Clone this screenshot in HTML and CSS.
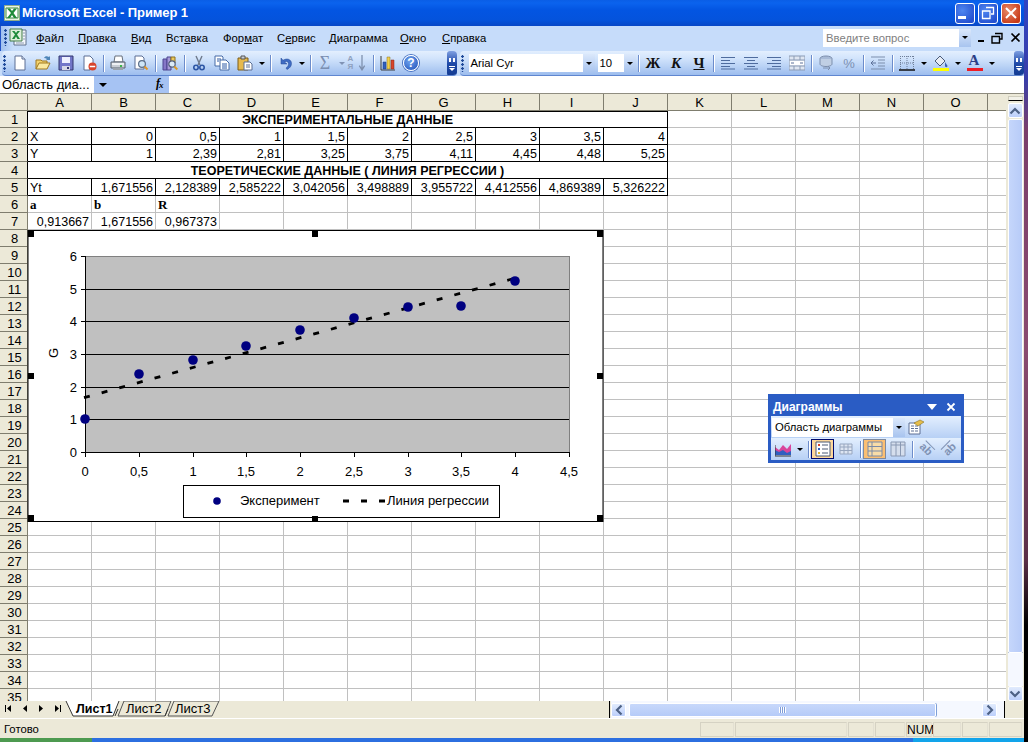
FILE: index.html
```html
<!DOCTYPE html>
<html lang="ru">
<head>
<meta charset="utf-8">
<title>Microsoft Excel - Пример 1</title>
<link rel="stylesheet" href="styles.css">
</head>
<body>
<svg class="defs" width="0" height="0">
  <symbol id="page" viewBox="0 0 16 16"><path d="M3 1h7l3 3v11H3z" fill="#fff" stroke="#5c6f94"/><path d="M10 1v3h3" fill="#dfe8f6" stroke="#5c6f94"/></symbol>
  <symbol id="open" viewBox="0 0 16 16"><path d="M1 14V5h5l1 1h5v2" fill="#f3d36e" stroke="#a07820"/><path d="M1 14l3-6h11l-3 6z" fill="#fbe9a0" stroke="#a07820"/><path d="M9 3c1-2 3-2 5-1l1-1v4h-4l1-1c-1-.8-2-1-3-1z" fill="#4f86b8"/></symbol>
  <symbol id="save" viewBox="0 0 16 16"><path d="M1 1h14v14H1z" fill="#7276c8" stroke="#33366f"/><path d="M4 2h8v6H4z" fill="#eef0ff"/><path d="M4 11h8v4H4z" fill="#d5d7e6"/><path d="M9 12h2v2H9z" fill="#33366f"/></symbol>
  <symbol id="perm" viewBox="0 0 16 16"><path d="M3 1h6l3 3v6H9v5H3z" fill="#fff" stroke="#5c6f94"/><circle cx="11.5" cy="11.5" r="4" fill="#d8452c"/><path d="M8.8 10.7h5.4v1.6H8.8z" fill="#fff"/></symbol>
  <symbol id="print" viewBox="0 0 16 16"><path d="M5 1h7l1 6H4z" fill="#fff" stroke="#68707c"/><path d="M1 7h14v6H1z" fill="#c7cdd4" stroke="#596270"/><path d="M2 8h12v2H2z" fill="#eef1f4"/><path d="M10 10h2v2h-2z" fill="#3bb44a"/><path d="M3 13h10v2H3z" fill="#9aa3ad"/></symbol>
  <symbol id="preview" viewBox="0 0 16 16"><path d="M2 1h7l2 2v11H2z" fill="#fff" stroke="#5c6f94"/><circle cx="9" cy="9" r="3.4" fill="#cfe6f7" stroke="#5a6d88" stroke-width="1.2"/><path d="M11.5 11.5l3 3" stroke="#e0962a" stroke-width="2"/></symbol>
  <symbol id="research" viewBox="0 0 16 16"><path d="M1 4h4v11H1z" fill="#8577c7" stroke="#4d4590"/><path d="M5 2h4v13H5z" fill="#a79ad8" stroke="#4d4590"/><path d="M9 2h4v6H9z" fill="#ecc85d" stroke="#8a7020"/><circle cx="10" cy="9" r="3.2" fill="#dcebf7" stroke="#4f5c78" stroke-width="1.2"/><path d="M12.3 11.5l3 3" stroke="#d99a2b" stroke-width="2"/></symbol>
  <symbol id="cut" viewBox="0 0 16 16"><path d="M5 1l4 9M11 1L7 10" stroke="#6f7a8c" stroke-width="1.4" fill="none"/><circle cx="5" cy="12.5" r="2.2" fill="none" stroke="#2d56a5" stroke-width="1.6"/><circle cx="11" cy="12.5" r="2.2" fill="none" stroke="#2d56a5" stroke-width="1.6"/></symbol>
  <symbol id="copy" viewBox="0 0 16 16"><path d="M1 1h7l1 1v9H1z" fill="#fff" stroke="#476aa6"/><path d="M6 5h6l3 3v7H6z" fill="#fff" stroke="#476aa6"/><path d="M3 4h4M3 6h2M8 9h5M8 11h5M8 13h5" stroke="#2f5aa5"/></symbol>
  <symbol id="paste" viewBox="0 0 16 16"><path d="M1 3h10v12H1z" fill="#e6b94e" stroke="#7c5c18"/><path d="M4 1h4v3H4z" fill="#c9cfd6" stroke="#555"/><path d="M7 7h6l2 2v6H7z" fill="#fff" stroke="#5c6f94"/><path d="M9 10h4M9 12h4" stroke="#5c6f94"/></symbol>
  <symbol id="undo" viewBox="0 0 16 16"><path d="M4 3v6h6L7.600 7c2-1.400 3.900-.3 3.900 2 0 1.600-.9 3-2.500 4l1 1.500C13 13 14.500 11 14.500 8.500 14.500 4.500 10 2.600 6 5.300z" fill="#3f6cc4" stroke="#244a96" stroke-width=".5"/></symbol>
  <symbol id="chart" viewBox="0 0 16 16"><path d="M1 1v14h14" fill="none" stroke="#3c3c3c"/><path d="M3 7h3v7H3z" fill="#2f5fc0" stroke="#1d3c80" stroke-width=".5"/><path d="M7 2h3v12H7z" fill="#f2d04a" stroke="#8a7020" stroke-width=".5"/><path d="M11 5h3v9h-3z" fill="#d8452c" stroke="#80281a" stroke-width=".5"/></symbol>
  <symbol id="alignl" viewBox="0 0 16 16"><path d="M1 2.500h14M1 5.500h9M1 8.500h14M1 11.500h9M1 14h14" stroke="#4f6c9e"/></symbol>
  <symbol id="alignc" viewBox="0 0 16 16"><path d="M1 2.500h14M4 5.500h8M1 8.500h14M4 11.500h8M1 14h14" stroke="#4f6c9e"/></symbol>
  <symbol id="alignr" viewBox="0 0 16 16"><path d="M1 2.500h14M6 5.500h9M1 8.500h14M6 11.500h9M1 14h14" stroke="#4f6c9e"/></symbol>
  <symbol id="merge" viewBox="0 0 16 16"><path d="M0 1h16v14H0z" fill="#dfe6f1" stroke="#8b9bb5"/><path d="M0 5h16M0 11h16M5 1v4M11 1v4M5 11v4M11 11v4" stroke="#8b9bb5"/><path d="M1 6h14v4H1z" fill="#fff"/><path d="M2 8h3M14 8h-3" stroke="#5c7199"/></symbol>
  <symbol id="currency" viewBox="0 0 16 16"><ellipse cx="8" cy="3.500" rx="6" ry="2.500" fill="#a8bad6" stroke="#7d8fad"/><path d="M2 4v5c0 1.500 3 2.500 6 2.500s6-1 6-2.500V4" fill="#c0cfe4" stroke="#7d8fad"/><path d="M5 13h7l-2-2M12 13l-2 2" fill="none" stroke="#7d8fad"/></symbol>
  <symbol id="indent" viewBox="0 0 16 16"><path d="M1 2h14M8 5h7M8 8h7M8 11h7M1 14h14" stroke="#7d8fad"/><path d="M6 8H1M3.500 5.500L1 8l2.500 2.500" fill="none" stroke="#5c7199"/></symbol>
  <symbol id="borders" viewBox="0 0 16 16"><path d="M1 1.500h14M1 8h14M1.500 1v13M8 1v13M14.500 1v13" stroke="#6f7f99" stroke-dasharray="1 1"/><path d="M0 15h16" stroke="#111" stroke-width="1.500"/></symbol>
  <symbol id="fill" viewBox="0 0 16 16"><path d="M2 6l5-5 5 5-5 5z" fill="#e6ecf5" stroke="#4a5a78"/><path d="M12 7c1 2 2.500 3 2.500 4 0 1.500-2.500 1.500-2.500 0z" fill="#3d63b4"/><path d="M0 13h16v3H0z" fill="#ffff00"/></symbol>
  <symbol id="fcolor" viewBox="0 0 16 16"><path d="M0 13h16v3H0z" fill="#ee1c25"/></symbol>
  <symbol id="area" viewBox="0 0 16 16"><path d="M0 13V6l4 3 4-5 4 4 4-5v10z" fill="#d9459b"/><path d="M0 14V9l4 2 4-2 4 3 4-2v4z" fill="#2f5fc0"/><path d="M0 4v11h16" fill="none" stroke="#333"/></symbol>
  <symbol id="legend" viewBox="0 0 16 16"><path d="M1 1h14v14H1z" fill="#fff" stroke="#4b5a74"/><path d="M3 3h2v2H3z" fill="#d8452c"/><path d="M3 7h2v2H3z" fill="#2f5fc0"/><path d="M3 11h2v2H3z" fill="#e0b52c"/><path d="M7 4h6M7 8h6M7 12h6" stroke="#4b5a74"/></symbol>
  <symbol id="dtable" viewBox="0 0 16 16"><path d="M2 3h12v10H2zM2 6h12M2 9.500h12M6 3v10M10 3v10" fill="#dde5f2" stroke="#97a6bf"/></symbol>
  <symbol id="byrow" viewBox="0 0 16 16"><path d="M1 1h14v14H1z" fill="#f8dca8" stroke="#7b8aa6"/><path d="M1 5.500h14M1 10h14M5 1v14" stroke="#7b8aa6"/></symbol>
  <symbol id="bycol" viewBox="0 0 16 16"><path d="M1 1h14v14H1z" fill="#d5deed" stroke="#8a99b3"/><path d="M1 4h14M6 1v14M10.500 1v14" stroke="#8a99b3"/></symbol>
  <symbol id="props" viewBox="0 0 16 16"><path d="M1 4h11v11H1z" fill="#fff" stroke="#5c6f94"/><path d="M3 7h3M3 9.500h3M3 12h3M7 7h3M7 9.500h3M7 12h3" stroke="#5c6f94"/><path d="M6 4l6-3 4 2-6 4z" fill="#e6be4a" stroke="#8a7020" stroke-width=".6"/></symbol>
</svg>

<div class="screen">
<div class="window">
  <header class="titlebar">
    <svg class="appicon" width="16" height="16" viewBox="0 0 16 16"><path d="M.5.5h15v15H.5z" fill="#e9f3e4" stroke="#8fae8a"/><path d="M2 3h12v10H2z" fill="#fff" stroke="#3c8a44"/><path d="M3 3.500l4 4.500-4 5h3l2-3 2 3h3L9.500 8 13 3.500h-3L8 6 6 3.500z" fill="#1f8a3a"/></svg>
    <span class="title">Microsoft Excel - Пример 1</span>
    <div class="winbtns">
      <div class="wbtn"><span class="g-min"></span></div>
      <div class="wbtn"><svg width="14" height="14" viewBox="0 0 14 14"><path d="M5 1.500h7.500V8H10M1.500 5H9v7.500H1.500z" fill="none" stroke="#fff" stroke-width="1.300"/></svg></div>
      <div class="wbtn close"><svg width="14" height="14" viewBox="0 0 14 14"><path d="M2 2l10 10M12 2L2 12" stroke="#fff" stroke-width="2"/></svg></div>
    </div>
  </header>

  <nav class="menubar">
    <span class="grip"></span>
    <svg class="docicon" width="19" height="19" viewBox="0 0 19 19"><path d="M5 2h12v15H5z" fill="#f4f7fb" stroke="#60708c"/><path d="M1 1h12v12H1z" fill="#dff0dc" stroke="#3e7a47"/><path d="M3 3l3 3.500L3 11h2.500L7 8.500 8.500 11H11L8 6.500 11 3H8.500L7 5 5.500 3z" fill="#1f8a3a"/><path d="M7 15h8M14 5h2M14 8h2M14 11h2" stroke="#8c9bb3"/></svg>
    <ul class="menu">
      <li><u>Ф</u>айл</li><li><u>П</u>равка</li><li><u>В</u>ид</li><li>Вст<u>а</u>вка</li><li>Фор<u>м</u>ат</li><li>С<u>е</u>рвис</li><li><u>Д</u>иаграмма</li><li><u>О</u>кно</li><li><u>С</u>правка</li>
    </ul>
    <div class="ask"><span class="asktext">Введите вопрос</span><span class="askdrop"><i class="tri"></i></span></div>
    <div class="docbtns">
      <span class="g-dmin"></span>
      <svg width="12" height="12" viewBox="0 0 12 12"><path d="M4 1.500h7V7H9M1 4.500h7.500V11H1z" fill="none" stroke="#000" stroke-width="1.400"/></svg>
      <svg width="11" height="11" viewBox="0 0 11 11"><path d="M1.500 1.500l8 8M9.500 1.500l-8 8" stroke="#000" stroke-width="1.700"/></svg>
    </div>
  </nav>

  <div class="toolrow">
    <div class="tb tb1">
      <span class="grip"></span>
      <span class="i"><svg><use href="#page"/></svg></span>
      <span class="i"><svg><use href="#open"/></svg></span>
      <span class="i"><svg><use href="#save"/></svg></span>
      <span class="i"><svg><use href="#perm"/></svg></span>
      <span class="sep"></span>
      <span class="i"><svg><use href="#print"/></svg></span>
      <span class="i"><svg><use href="#preview"/></svg></span>
      <span class="sep"></span>
      <span class="i"><svg><use href="#research"/></svg></span>
      <span class="sep"></span>
      <span class="i"><svg><use href="#cut"/></svg></span>
      <span class="i"><svg><use href="#copy"/></svg></span>
      <span class="i"><svg><use href="#paste"/></svg></span>
      <span class="dd"><i class="tri"></i></span>
      <span class="sep"></span>
      <span class="i"><svg><use href="#undo"/></svg></span>
      <span class="dd"><i class="tri"></i></span>
      <span class="sep"></span>
      <span class="i glyph sigma">Σ</span>
      <span class="dd"><i class="tri off"></i></span>
      <span class="i"><span class="sort"><span class="az"><span>А</span><span>Я</span></span><svg class="sortarrow" width="6" height="15" viewBox="0 0 6 15"><path d="M3 0v13M.5 10L3 14l2.500-4" fill="none" stroke="#7d8fad" stroke-width="1.200"/></svg></span></span>
      <span class="sep"></span>
      <span class="i"><svg><use href="#chart"/></svg></span>
      <span class="i help"><span class="helpdot">?</span></span>
      <span class="chev"><i class="ff"></i><i class="bar"></i><i class="tri white"></i></span>
    </div>
    <div class="tb tb2">
      <span class="grip"></span>
      <div class="combo font"><span>Arial Cyr</span><span class="cdrop"><i class="tri"></i></span></div>
      <div class="combo size"><span>10</span><span class="cdrop"><i class="tri"></i></span></div>
      <span class="sep"></span>
      <span class="i glyph fmt">Ж</span>
      <span class="i glyph fmt it">К</span>
      <span class="i glyph fmt ul">Ч</span>
      <span class="sep"></span>
      <span class="i"><svg><use href="#alignl"/></svg></span>
      <span class="i"><svg><use href="#alignc"/></svg></span>
      <span class="i"><svg><use href="#alignr"/></svg></span>
      <span class="i"><svg><use href="#merge"/></svg></span>
      <span class="sep"></span>
      <span class="i"><svg><use href="#currency"/></svg></span>
      <span class="i glyph pct">%</span>
      <span class="sep"></span>
      <span class="i"><svg><use href="#indent"/></svg></span>
      <span class="sep"></span>
      <span class="i"><svg><use href="#borders"/></svg></span>
      <span class="dd"><i class="tri"></i></span>
      <span class="i"><svg><use href="#fill"/></svg></span>
      <span class="dd"><i class="tri"></i></span>
      <span class="i colorA"><span class="letterA">A</span><svg><use href="#fcolor"/></svg></span>
      <span class="dd"><i class="tri"></i></span>
      <span class="chev"><i class="ff"></i><i class="bar"></i><i class="tri white"></i></span>
    </div>
  </div>

  <div class="formula">
    <div class="namebox">Область диа...</div>
    <div class="namedrop"><i class="tri wide3"></i></div>
    <div class="fx">f<sub>x</sub></div>
    <div class="finput"></div>
  </div>

  <main class="sheet">
    <div class="grid">
      <div class="row head">
        <div class="rh corner"></div>
        <div class="ch">A</div><div class="ch">B</div><div class="ch">C</div><div class="ch">D</div><div class="ch">E</div><div class="ch">F</div><div class="ch">G</div><div class="ch">H</div><div class="ch">I</div><div class="ch">J</div><div class="ch">K</div><div class="ch">L</div><div class="ch">M</div><div class="ch">N</div><div class="ch">O</div><div class="ch last"></div>
      </div>
      <div class="row"><div class="rh blk">1</div><div class="c wide bd toprule bold">ЭКСПЕРИМЕНТАЛЬНЫЕ ДАННЫЕ</div><div class="fill"></div></div>
      <div class="row"><div class="rh blk">2</div><div class="c bd t">X</div><div class="c bd n">0</div><div class="c bd n">0,5</div><div class="c bd n">1</div><div class="c bd n">1,5</div><div class="c bd n">2</div><div class="c bd n">2,5</div><div class="c bd n">3</div><div class="c bd n">3,5</div><div class="c bd n">4</div><div class="fill"></div></div>
      <div class="row"><div class="rh blk">3</div><div class="c bd t">Y</div><div class="c bd n">1</div><div class="c bd n">2,39</div><div class="c bd n">2,81</div><div class="c bd n">3,25</div><div class="c bd n">3,75</div><div class="c bd n">4,11</div><div class="c bd n">4,45</div><div class="c bd n">4,48</div><div class="c bd n">5,25</div><div class="fill"></div></div>
      <div class="row"><div class="rh blk">4</div><div class="c wide bd bold">ТЕОРЕТИЧЕСКИЕ ДАННЫЕ ( ЛИНИЯ РЕГРЕССИИ )</div><div class="fill"></div></div>
      <div class="row"><div class="rh blk">5</div><div class="c bd t">Yt</div><div class="c bd n">1,671556</div><div class="c bd n">2,128389</div><div class="c bd n">2,585222</div><div class="c bd n">3,042056</div><div class="c bd n">3,498889</div><div class="c bd n">3,955722</div><div class="c bd n">4,412556</div><div class="c bd n">4,869389</div><div class="c bd n">5,326222</div><div class="fill"></div></div>
      <div class="row"><div class="rh">6</div><div class="c t lab">a</div><div class="c t lab">b</div><div class="c t lab">R</div><div class="fill"></div></div>
      <div class="row"><div class="rh">7</div><div class="c n">0,913667</div><div class="c n">1,671556</div><div class="c n">0,967373</div><div class="fill"></div></div>
      <div class="row"><div class="rh">8</div><div class="fill"></div></div>
      <div class="row"><div class="rh">9</div><div class="fill"></div></div>
      <div class="row"><div class="rh">10</div><div class="fill"></div></div>
      <div class="row"><div class="rh">11</div><div class="fill"></div></div>
      <div class="row"><div class="rh">12</div><div class="fill"></div></div>
      <div class="row"><div class="rh">13</div><div class="fill"></div></div>
      <div class="row"><div class="rh">14</div><div class="fill"></div></div>
      <div class="row"><div class="rh">15</div><div class="fill"></div></div>
      <div class="row"><div class="rh">16</div><div class="fill"></div></div>
      <div class="row"><div class="rh">17</div><div class="fill"></div></div>
      <div class="row"><div class="rh">18</div><div class="fill"></div></div>
      <div class="row"><div class="rh">19</div><div class="fill"></div></div>
      <div class="row"><div class="rh">20</div><div class="fill"></div></div>
      <div class="row"><div class="rh">21</div><div class="fill"></div></div>
      <div class="row"><div class="rh">22</div><div class="fill"></div></div>
      <div class="row"><div class="rh">23</div><div class="fill"></div></div>
      <div class="row"><div class="rh">24</div><div class="fill"></div></div>
      <div class="row"><div class="rh">25</div><div class="fill"></div></div>
      <div class="row"><div class="rh">26</div><div class="fill"></div></div>
      <div class="row"><div class="rh">27</div><div class="fill"></div></div>
      <div class="row"><div class="rh">28</div><div class="fill"></div></div>
      <div class="row"><div class="rh">29</div><div class="fill"></div></div>
      <div class="row"><div class="rh">30</div><div class="fill"></div></div>
      <div class="row"><div class="rh">31</div><div class="fill"></div></div>
      <div class="row"><div class="rh">32</div><div class="fill"></div></div>
      <div class="row"><div class="rh">33</div><div class="fill"></div></div>
      <div class="row"><div class="rh">34</div><div class="fill"></div></div>
      <div class="row"><div class="rh">35</div><div class="fill"></div></div>
    </div>
    <div class="vscroll">
      <div class="vsplit"></div>
      <div class="sbtn"><svg width="12" height="10" viewBox="0 0 12 10"><path d="M1.500 7.500L6 3l4.500 4.500" fill="none" stroke="#4d6185" stroke-width="2.200"/></svg></div>
      <div class="vthumb"></div>
      <div class="vtrack"></div>
      <div class="sbtn"><svg width="12" height="10" viewBox="0 0 12 10"><path d="M1.500 2.500L6 7l4.500-4.500" fill="none" stroke="#4d6185" stroke-width="2.200"/></svg></div>
    </div>
  </main>

  <div class="tabrow">
    <svg class="tabs" width="224" height="17" viewBox="0 0 224 17">
      <path class="nav" d="M11 4l-4 3.500 4 3.500z"/>
      <path class="navline" d="M5.500 4v7"/>
      <path class="nav" d="M27 4l-4 3.500 4 3.500z"/>
      <path class="nav" d="M39 4l4 3.500-4 3.500z"/>
      <path class="nav" d="M55 4l4 3.500-4 3.500z"/>
      <path class="navline" d="M60.500 4v7"/>
      <path class="tabshape" d="M118 15h47l6-15h-47z M168 15h44l7-15h-45z"/>
      <path class="tabactive" d="M66 0l7 15h40l6-15z"/>
      <path class="tabedge" d="M66 0l7 15h40l6-15M115 15l3-7M165 15l3-7"/>
      <text class="t-tab on" x="76" y="12">Лист1</text>
      <text class="t-tab" x="126" y="12">Лист2</text>
      <text class="t-tab" x="175" y="12">Лист3</text>
    </svg>
    <div class="hscroll">
      <span class="hsplit"></span>
      <div class="sbtn h"><svg width="10" height="12" viewBox="0 0 10 12"><path d="M7.500 1.500L3 6l4.500 4.500" fill="none" stroke="#4d6185" stroke-width="2.200"/></svg></div>
      <div class="hthumb"><span class="thumbgrip"></span></div>
      <div class="htrack"></div>
      <div class="sbtn h"><svg width="10" height="12" viewBox="0 0 10 12"><path d="M2.500 1.500L7 6l-4.500 4.500" fill="none" stroke="#4d6185" stroke-width="2.200"/></svg></div>
      <span class="hsplit end"></span>
    </div>
    <div class="sizer"></div>
  </div>

  <footer class="status">
    <span class="ready">Готово</span>
    <div class="panels">
      <span class="p p1"></span><span class="p p2"></span><span class="p p3"></span><span class="p p4"></span><span class="p p5">NUM</span><span class="p p6"></span><span class="p p7"></span><span class="p p8"></span>
    </div>
  </footer>

  <div class="taskbar"><span class="start"></span><span class="tasks"></span><span class="tray"></span></div>

  <svg class="chart" width="576" height="293" viewBox="28 230 576 293">
    <rect class="frame" x="28" y="230.500" width="575" height="291"/>
    <rect class="plot" x="85.500" y="256.500" width="484" height="196"/>
    <path class="gl" d="M85 289.500h484M85 321.500h484M85 354.500h484M85 387.500h484M85 419.500h484"/>
    <path class="gl" d="M85.500 256v197M81 256.500h5M81 289.500h5M81 321.500h5M81 354.500h5M81 387.500h5M81 419.500h5M81 452.500h5M85 452.500h484M85.500 452v5M139.500 452v5M193.500 452v5M246.500 452v5M300.500 452v5M354.500 452v5M408.500 452v5M461.500 452v5M515.500 452v5M569.500 452v5"/>
    <path class="trend" d="M84 397.700L515 278.200"/>
    <g class="pts">
      <circle cx="85" cy="419" r="4.800"/><circle cx="139" cy="374" r="4.800"/><circle cx="193" cy="360" r="4.800"/><circle cx="246" cy="346" r="4.800"/><circle cx="300" cy="330" r="4.800"/><circle cx="354" cy="318" r="4.800"/><circle cx="408" cy="307" r="4.800"/><circle cx="461" cy="306" r="4.800"/><circle cx="515" cy="281" r="4.800"/>
    </g>
    <g class="ax ar">
      <text x="77" y="261">6</text><text x="77" y="294">5</text><text x="77" y="326">4</text><text x="77" y="359">3</text><text x="77" y="392">2</text><text x="77" y="424">1</text><text x="77" y="457">0</text>
    </g>
    <g class="ax ac">
      <text x="85" y="476">0</text><text x="139" y="476">0,5</text><text x="193" y="476">1</text><text x="246" y="476">1,5</text><text x="300" y="476">2</text><text x="354" y="476">2,5</text><text x="408" y="476">3</text><text x="461" y="476">3,5</text><text x="515" y="476">4</text><text x="569" y="476">4,5</text>
    </g>
    <text class="ax" transform="translate(58 353) rotate(-90)" text-anchor="middle">G</text>
    <rect class="frame" x="183.500" y="485.500" width="316" height="32"/>
    <circle class="pt" cx="217" cy="501" r="3.800"/>
    <text class="ax" x="240" y="505">Эксперимент</text>
    <path class="lg" d="M343 501h6M361 501h6M379 501h6"/>
    <text class="ax" x="387" y="505">Линия регрессии</text>
    <path class="hd" d="M28 231h6v6h-6zM312 231h6v6h-6zM597 231h6v6h-6zM28 373h6v6h-6zM597 373h6v6h-6zM28 515h6v6h-6zM312 516h6v5h-6zM597 515h6v6h-6z"/>
  </svg>

  <aside class="palette">
    <div class="ptitle"><span>Диаграммы</span><i class="tri white big"></i><svg width="10" height="10" viewBox="0 0 10 10"><path d="M1.500 1.500l7 7M8.500 1.500l-7 7" stroke="#fff" stroke-width="1.800"/></svg></div>
    <div class="prow r1">
      <div class="pcombo"><span>Область диаграммы</span><span class="cdrop"><i class="tri"></i></span></div>
      <span class="i"><svg><use href="#props"/></svg></span>
    </div>
    <div class="prow r2">
      <span class="i"><svg><use href="#area"/></svg></span>
      <span class="dd"><i class="tri"></i></span>
      <span class="sep"></span>
      <span class="i active"><svg><use href="#legend"/></svg></span>
      <span class="i"><svg><use href="#dtable"/></svg></span>
      <span class="sep"></span>
      <span class="i pressed"><svg><use href="#byrow"/></svg></span>
      <span class="i"><svg><use href="#bycol"/></svg></span>
      <span class="sep"></span>
      <span class="i"><span class="ab up">ab</span></span>
      <span class="i"><span class="ab down">ab</span></span>
    </div>
  </aside>
</div>
<div class="strip"></div>
</div>
</body>
</html>
```
FILE: styles.css
```css
* { box-sizing: border-box; }
html, body { margin: 0; padding: 0; }
body { width: 1028px; height: 742px; overflow: hidden; font-family: "Liberation Sans", Arial, sans-serif; background: #000; }
.defs { position: absolute; width: 0; height: 0; }
.screen { display: flex; width: 1028px; height: 742px; }
.window { position: relative; width: 1024px; height: 742px; display: flex; flex-direction: column; background: #ece9d8; overflow: hidden; }
.strip { flex: 1; background: linear-gradient(#2f44c4 0, #3a3fa8 80px, #7a3e6a 130px, #8a4b70 350px, #5b2f48 560px, #000 625px); }

/* title bar */
.titlebar { height: 26px; display: flex; align-items: center; padding: 0 3px 0 4px; background: linear-gradient(#0a5ee6 0, #0b63ee 3px, #0355e2 10px, #0453dc 20px, #0847c6 26px); }
.appicon { margin-right: 2px; }
.title { color: #fff; font: bold 13px/20px "Liberation Sans", sans-serif; letter-spacing: -.1px; }
.winbtns { margin-left: auto; display: flex; gap: 3px; }
.wbtn { width: 20px; height: 21px; border: 1px solid #fff; border-radius: 3px; background: radial-gradient(circle at 35% 35%, #4f86f0, #2450d0 80%); display: flex; align-items: center; justify-content: center; }
.wbtn.close { background: radial-gradient(circle at 35% 35%, #e98a68, #c73a18 80%); }
.g-min { width: 8px; height: 3px; background: #fff; margin: 9px 6px 0 0; }

/* menu */
.menubar { height: 25px; display: flex; align-items: center; padding: 0 0 2px 2px; background: linear-gradient(90deg, #9fc0f0 0, #c6dcfa 12px, #c6dcfa 100%); border-left: 1px solid #2454c8; font: 11.300px/16px "Liberation Sans", sans-serif; color: #000; }
.grip { width: 6.500px; height: 17px; flex: none; background: radial-gradient(circle at 1.500px 1.500px, #1f4a9a 1px, transparent 1.500px) 1px 0 / 3px 4px repeat-y; }
.menubar .grip { width: 6px; }
.docicon { flex: none; }
.menu { list-style: none; margin: 0 0 0 8px; padding: 0; display: grid; grid-template-columns: 42px 53px 35px 57px 54px 52px 71px 42px auto; }
.ask { margin-left: auto; width: 148px; height: 18px; background: #fff; display: flex; align-items: center; padding-left: 3px; color: #7f7f7f; }
.asktext { flex: 1; }
.askdrop { width: 12px; height: 18px; display: flex; align-items: center; justify-content: center; background: linear-gradient(#dbe8fb, #a8c4ef); }
.docbtns { display: flex; align-items: center; gap: 7px; width: 53px; padding-left: 7px; }
.g-dmin { width: 6px; height: 2px; background: #000; margin-top: 6px; }

/* toolbars */
.toolrow { height: 25px; display: flex; background: #c6dcfa; }
.tb { height: 25px; display: flex; align-items: center; border-radius: 4px; background: linear-gradient(#e3effe 0, #d2e4fc 30%, #bcd4f6 60%, #9dbdee 100%); border-bottom: 1px solid #5f86d0; overflow: hidden; }
.tb1 { width: 455px; margin-left: 2px; }
.tb2 { width: 564px; margin-left: 3px; }
.i { width: 23px; height: 22px; flex: none; display: flex; align-items: center; justify-content: center; }
.i svg { width: 16px; height: 16px; }
.dd { width: 11px; height: 22px; flex: none; display: flex; align-items: center; justify-content: center; }
.sep { width: 6px; height: 22px; flex: none; display: flex; justify-content: center; align-items: center; }
.sep::after { content: ""; width: 1px; height: 17px; background: #6c8ccb; box-shadow: 1px 0 #fff; }
.tri { display: block; width: 0; height: 0; border-left: 3px solid transparent; border-right: 3px solid transparent; border-top: 3px solid #000; }
.tri.off { border-top-color: #8093b5; }
.tri.white { border-top-color: #fff; }
.tri.wide3 { border-left-width: 4px; border-right-width: 4px; border-top-width: 4px; }
.glyph { font-family: "Liberation Serif", serif; }
.sigma { font-size: 18px; color: #7b8fb2; }
.sort { display: flex; align-items: center; gap: 1px; }
.az { display: flex; flex-direction: column; font: bold 8px/8px "Liberation Sans", sans-serif; color: #8fa1bf; }
.helpdot { width: 16px; height: 16px; border-radius: 50%; background: radial-gradient(circle at 40% 35%, #6fa3ee, #1f4fb8); border: 1px solid #fff; box-shadow: 0 0 0 1px #4a74c4; color: #fff; font: bold 12px/14px "Liberation Sans", sans-serif; text-align: center; }
.chev { margin-left: auto; width: 10px; height: 25px; flex: none; background: linear-gradient(#7e9fe2, #1f4aa8 50%, #133a90); display: flex; flex-direction: column; align-items: center; padding-top: 7px; border-radius: 3px 0 0 3px; }
.chev .ff { width: 7px; height: 4px; background: linear-gradient(90deg, #fff 0 2px, transparent 2px 4px, #fff 4px 6px, transparent 6px); }
.chev .bar { width: 6px; height: 1px; background: #fff; margin: 4px 0 1px; }
.combo { height: 18px; background: #fff; display: flex; align-items: center; margin-left: 2px; font: 11.300px/16px "Liberation Sans", sans-serif; color: #000; padding-left: 2px; }
.combo > span:first-child { flex: 1; }
.combo.font { width: 126px; }
.combo.size { width: 38px; margin-left: 3px; }
.cdrop { width: 12px; height: 18px; flex: none; display: flex; align-items: center; justify-content: center; background: linear-gradient(#dbe8fb, #a8c4ef); }
.fmt { font-weight: bold; font-size: 15px; color: #111; }
.it { font-style: italic; }
.ul { text-decoration: underline; }
.pct { font: 13px "Liberation Sans", sans-serif; color: #7b8fb2; }
.colorA { position: relative; }
.letterA { position: absolute; top: 0; left: 5px; font: bold 15px/17px "Liberation Serif", serif; color: #2c3f86; }

/* formula bar */
.formula { height: 17px; display: flex; background: #a6c3f3; font: 13px/18px "Liberation Sans", sans-serif; }
.namebox { width: 94px; background: #fff; padding-left: 2px; white-space: nowrap; overflow: hidden; }
.namedrop { width: 22px; display: flex; align-items: center; justify-content: center; padding-right: 4px; }
.fx { width: 53px; padding-left: 40px; font: italic bold 12px/15px "Liberation Serif", serif; white-space: nowrap; }
.fx sub { font-size: 9px; vertical-align: -1px; line-height: 0; margin-left: -1px; }
.finput { flex: 1; background: #fff; }

/* sheet */
.sheet { height: 608px; display: flex; border-top: 1px solid #8f8d80; background: #fff; overflow: hidden; }
.grid { width: 1006px; overflow: hidden; font-size: 12.500px; }
.row { display: flex; height: 17px; }
.head { background: #ece9d8; }
.rh { width: 28px; flex: none; padding-left: 2px; text-align: center; background: #ece9d8; border-right: 1px solid #7f7d6e; border-bottom: 1px solid #7f7d6e; font-size: 13px; line-height: 18px; color: #000; overflow: hidden; }
.rh.blk { border-right-color: #000; }
.ch { width: 64px; flex: none; text-align: center; border-right: 1px solid #7f7d6e; border-bottom: 1px solid #7f7d6e; font-size: 13px; line-height: 18px; }
.ch.last { width: 18px; flex: 1; border-right: 0; }
.c { width: 64px; flex: none; height: 17px; border-right: 1px solid #c0c0c0; border-bottom: 1px solid #c0c0c0; line-height: 18px; padding: 0 2px; white-space: nowrap; overflow: hidden; color: #000; }
.bd { border-color: #000; }
.wide { width: 640px; text-align: center; }
.bold { font-weight: bold; font-size: 12.500px; }
.toprule { box-shadow: inset 0 1px #000; }
.n { text-align: right; padding-right: 2px; }
.t { padding-left: 2px; }
.lab { font: bold 13px/18px "Liberation Serif", serif; }
.fill { flex: 1; height: 17px; border-bottom: 1px solid #c0c0c0; background: repeating-linear-gradient(90deg, #fff 0 63px, #c0c0c0 63px 64px); }

.vscroll { width: 18px; display: flex; flex-direction: column; align-items: center; background: #ece9d8; padding-top: 2px; }
.vsplit { width: 15px; height: 5px; background: #f2f1e8; border: 1px solid #cfcdbd; border-bottom: 1px solid #000; margin-bottom: 2px; }
.sbtn { width: 15px; height: 15px; flex: none; border: 1px solid #fff; border-radius: 2px; background: linear-gradient(#e1ebfd, #bccffb); display: flex; align-items: center; justify-content: center; }
.vthumb { width: 15px; height: 534px; margin-top: 1px; flex: none; border: 1px solid #fff; border-radius: 2px; background: linear-gradient(90deg, #c5d6fb, #b7cbf8); box-shadow: 0 1px #7e9fd8; }
.vtrack { flex: 1; width: 15px; background: #f5f8ff; }

/* tabs + scroll */
.tabrow { height: 17px; display: flex; background: #ece9d8; overflow: hidden; }
.tabs { flex: none; }
.nav { fill: #000; }
.navline { stroke: #000; fill: none; }
.tabshape { fill: #ece9d8; stroke: #555; }
.tabactive { fill: #fff; }
.tabedge { fill: none; stroke: #333; }
.t-tab { font: 13px "Liberation Sans", sans-serif; fill: #000; }
.t-tab.on { font-weight: bold; font-size: 12.500px; }
.hscroll { margin-left: auto; width: 397px; height: 17px; display: flex; align-items: center; background: #f5f8ff; }
.hsplit { width: 2px; height: 17px; border-left: 1px solid #000; background: #ece9d8; flex: none; }
.hsplit.end { margin-left: 7px; }
.sbtn.h { height: 14px; }
.hthumb { width: 307px; height: 14px; margin-left: 3px; flex: none; border: 1px solid #fff; border-radius: 2px; background: linear-gradient(#c7d8fb, #b5cbf8); display: flex; align-items: center; justify-content: center; box-shadow: 1px 0 #7e9fd8; }
.thumbgrip { width: 7px; height: 6px; background: repeating-linear-gradient(90deg, #fff 0 1px, #7f9cd6 1px 2px); }
.htrack { flex: 1; }
.sizer { width: 18px; flex: none; background: #ece9d8; }

/* status bar */
.status { height: 20px; display: flex; align-items: center; padding: 1px 0 0 4px; border-top: 1px solid #fff; font: 11.300px/16px "Liberation Sans", sans-serif; background: #ece9d8; }
.panels { margin-left: auto; display: flex; gap: 1px; height: 16px; margin-top: 2px; margin-right: 2px; }
.p { display: block; height: 15px; border: 1px solid #d5d2c3; border-right-color: #e3e0d2; text-align: center; font: 12px/14px "Liberation Sans", sans-serif; }
.p1 { width: 34px; } .p2 { width: 112px; } .p3 { width: 26px; } .p4 { width: 30px; } .p5 { width: 26px; } .p6 { width: 28px; } .p7 { width: 26px; } .p8 { width: 33px; }

.taskbar { height: 4px; display: flex; }
.start { width: 92px; background: #4d9a50; }
.tasks { flex: 1; background: #2c6fe0; }
.tray { width: 111px; background: #12a4ea; }

/* chart */
.chart { position: absolute; left: 28px; top: 230px; overflow: visible; }
.frame { fill: #fff; stroke: #000; stroke-width: 1; }
.plot { fill: #c0c0c0; stroke: #808080; stroke-width: 1; }
.gl { stroke: #000; stroke-width: 1; fill: none; }
.trend { stroke: #000; stroke-width: 2.800; stroke-dasharray: 6 12.300; fill: none; }
.pts circle, .pt { fill: #000080; }
.ax { font: 13px "Liberation Sans", sans-serif; fill: #000; }
.ar { text-anchor: end; }
.ac { text-anchor: middle; }
.lg { stroke: #000; stroke-width: 3; fill: none; }
.hd { fill: #000; }

/* floating palette */
.palette { position: absolute; left: 768px; top: 394px; width: 196px; height: 69px; border: 3px solid #2a5cc4; background: #c6dcfa; font: 11.300px/16px "Liberation Sans", sans-serif; display: flex; flex-direction: column; }
.ptitle { height: 20px; background: #2a5cc4; color: #fff; display: flex; align-items: center; padding: 0 5px 0 2px; gap: 9px; font: bold 12px/18px "Liberation Sans", sans-serif; }
.ptitle span { flex: 1; }
.tri.big { border-left-width: 5px; border-right-width: 5px; border-top-width: 6px; }
.prow { display: flex; align-items: center; height: 22px; background: linear-gradient(#e3effe, #b7d0f5); }
.pcombo { width: 133px; height: 19px; margin-left: 1px; background: #fff; display: flex; align-items: center; padding-left: 3px; color: #000; }
.pcombo > span:first-child { flex: 1; }
.pcombo .cdrop { height: 19px; }
.r1 .i { width: 22px; }
.r2 .i { height: 20px; }
.active { background: #fdd79b; outline: 1px solid #000a6e; outline-offset: -1px; }
.pressed { background: #fbbf72; outline: 1px solid #7f8a9e; outline-offset: -1px; }
.ab { display: block; font: bold 11px/11px "Liberation Sans", sans-serif; color: #7f91b3; border-top: 1px solid #7f91b3; }
.ab.up { transform: rotate(45deg); }
.ab.down { transform: rotate(-45deg); }
```
